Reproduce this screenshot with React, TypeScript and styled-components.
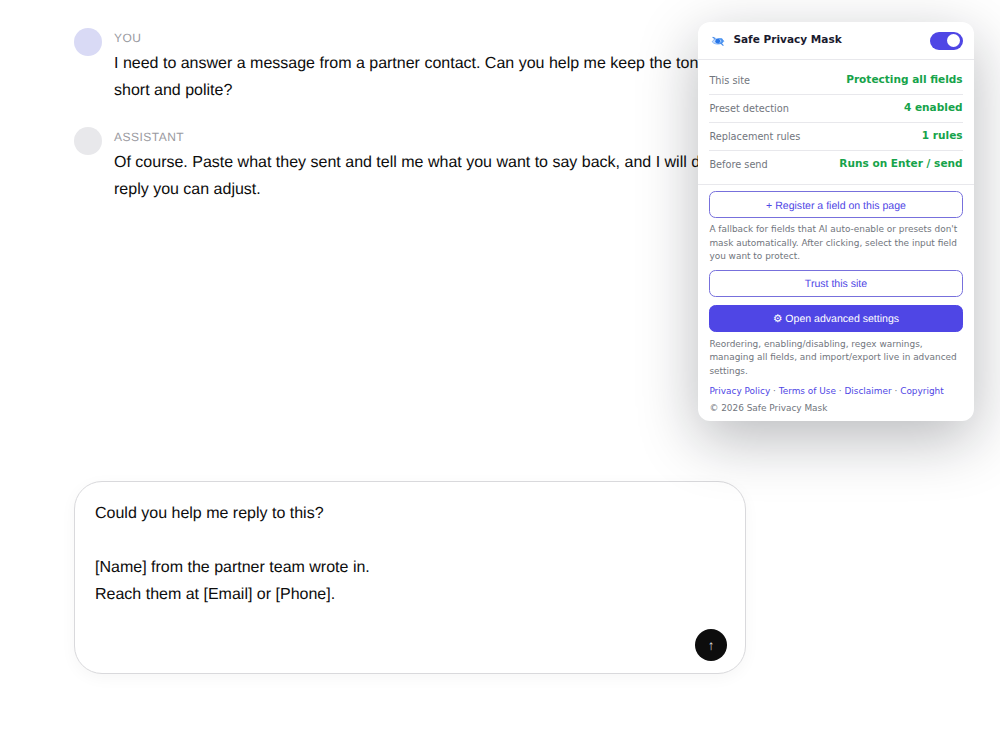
import React from "react";
import styled, { createGlobalStyle } from "styled-components";

const Global = createGlobalStyle`
  * { box-sizing: border-box; }
  body { margin: 0; background: #fff; overflow: hidden; }
`;

const Page = styled.main`
  width: 1000px;
  height: 750px;
  padding: 28px 0 0 74px;
  font: 16px/27.2px "Liberation Sans", Arial, sans-serif;
  color: #0d0d0d;
  text-rendering: geometricPrecision;
`;

const Thread = styled.section`
  display: flex;
  flex-direction: column;
  gap: 23px;
  height: 453px;
`;

const Message = styled.article`
  display: flex;
  gap: 12px;
  width: 672px;
`;

const Avatar = styled.div<{ $color: string }>`
  flex: none;
  width: 28px;
  height: 28px;
  border-radius: 50%;
  background: ${(p) => p.$color};
`;

const Role = styled.div`
  margin-bottom: 1.4px;
  font-size: 12px;
  line-height: 20.4px;
  letter-spacing: 0.48px;
  color: #9a9a9f;
`;

const Line = styled.div`
  white-space: nowrap;
`;

const Composer = styled.section`
  display: flex;
  justify-content: space-between;
  width: 672px;
  height: 193px;
  padding: 17.6px 18px 12px 20px;
  border: 1px solid #d9d9dc;
  border-radius: 28px;
  background: #fff;
  box-shadow: 0 4px 16px rgba(0, 0, 0, 0.04);
`;

const Draft = styled.div`
  white-space: pre-line;
`;

const Send = styled.button`
  align-self: flex-end;
  display: grid;
  place-items: center;
  width: 32px;
  height: 32px;
  padding: 0;
  border: 0;
  border-radius: 50%;
  background: #0d0d0d;
  color: #ddd;
  font: 13.3px "Liberation Sans", Arial, sans-serif;
`;

const Popup = styled.aside`
  position: absolute;
  left: 698px;
  top: 22px;
  width: 276px;
  height: 399.4px;
  border-radius: 12px;
  background: #fff;
  box-shadow: 0 18px 60px rgba(15, 17, 26, 0.29);
  font: 8.94px/13.4px "DejaVu Sans", sans-serif;
  color: #71757d;
`;

const Header = styled.header`
  display: flex;
  align-items: center;
  height: 38px;
  padding: 0 11.4px;
  border-bottom: 1px solid #e8e8ec;
`;

const Title = styled.h1`
  flex: 1;
  margin: -2px 0 0 6px;
  font-size: 10.56px;
  font-weight: 700;
  color: #1a1a2e;
`;

const Toggle = styled.div`
  display: flex;
  justify-content: flex-end;
  width: 32.5px;
  height: 18px;
  padding: 2.5px;
  border-radius: 9px;
  background: #4f46e5;
`;

const Knob = styled.div`
  width: 13px;
  height: 13px;
  border-radius: 50%;
  background: #fff;
`;

const Status = styled.dl`
  margin: 0;
  height: 125px;
  padding: 7px 11.4px;
  border-bottom: 1px solid #e8e8ec;
`;

const Row = styled.div`
  display: flex;
  justify-content: space-between;
  align-items: center;
  height: 28px;
  border-bottom: 1px solid #e8e8ec;
  &:last-child { height: 26px; border-bottom: 0; }
`;

const Label = styled.dt`
  padding-top: 0.6px;
  font-size: 9.74px;
`;

const Value = styled.dd`
  margin: 0;
  padding-bottom: 1.2px;
  font-size: 10.56px;
  font-weight: 700;
  color: #16a34a;
`;

const Actions = styled.section`
  padding: 6.4px 11.4px 0;
`;

const Button = styled.button<{ $primary?: boolean }>`
  display: block;
  width: 100%;
  height: 27px;
  padding: 1.6px 0 0;
  border: 1px solid ${(p) => (p.$primary ? "#4f46e5" : "#7770dc")};
  border-radius: 6.5px;
  background: ${(p) => (p.$primary ? "#4f46e5" : "#fff")};
  color: ${(p) => (p.$primary ? "#fff" : "#4f46e5")};
  font: 10.56px "Liberation Sans", Arial, sans-serif;
  text-rendering: geometricPrecision;
  & + & { margin-top: 8px; }
`;

const Hint = styled.p<{ $top: number }>`
  margin: ${(p) => p.$top}px 0 6.6px;
  white-space: nowrap;
`;

const Links = styled.nav`
  white-space: nowrap;
`;

const Anchor = styled.a`
  color: #4f46e5;
`;

const Copyright = styled.div`
  margin-top: 3.5px;
`;

function Logo() {
  return (
    <svg width="18" height="16" viewBox="0 0 18 16" fill="none">
      <path d="M3.2 8.8C4.2 5.6 11.5 4.2 15 8.2C13 11.4 6.2 12.4 3.2 8.8Z" fill="#c5dcfc" stroke="#7db0f7" strokeWidth=".9" />
      <path d="M9.3 5.2H13L14.7 8.1L12.8 10.8L8.7 10.8Z" fill="#4c94f0" />
      <circle cx="8.7" cy="8.2" r="2.4" fill="#2876e8" />
      <path d="M3.6 4.2L6.4 5.6M11.6 9.8L14.4 12.6" stroke="#4389e8" strokeWidth="1.2" />
      <path d="M10.8 6.4L12 8.1L10.8 9.7" stroke="#d9e9ff" strokeWidth=".7" />
    </svg>
  );
}

const rows = [
  ["This site", "Protecting all fields"],
  ["Preset detection", "4 enabled"],
  ["Replacement rules", "1 rules"],
  ["Before send", "Runs on Enter / send"],
];

export default function App() {
  return (
    <>
      <Global />
      <Page>
        <Thread>
          <Message>
            <Avatar $color="#d9daf5" />
            <div>
              <Role>YOU</Role>
              <Line>I need to answer a message from a partner contact. Can you help me keep the tone</Line>
              <Line>short and polite?</Line>
            </div>
          </Message>
          <Message>
            <Avatar $color="#e8e8eb" />
            <div>
              <Role>ASSISTANT</Role>
              <Line>Of course. Paste what they sent and tell me what you want to say back, and I will draft a</Line>
              <Line>reply you can adjust.</Line>
            </div>
          </Message>
        </Thread>
        <Composer>
          <Draft>{"Could you help me reply to this?\n\n[Name] from the partner team wrote in.\nReach them at [Email] or [Phone]."}</Draft>
          <Send>↑</Send>
        </Composer>
      </Page>
      <Popup>
        <Header>
          <Logo />
          <Title>Safe Privacy Mask</Title>
          <Toggle><Knob /></Toggle>
        </Header>
        <Status>
          {rows.map(([label, value]) => (
            <Row key={label}>
              <Label>{label}</Label>
              <Value>{value}</Value>
            </Row>
          ))}
        </Status>
        <Actions>
          <Button>+ Register a field on this page</Button>
          <Hint $top={4.8}>
            A fallback for fields that AI auto-enable or presets don't<br />
            mask automatically. After clicking, select the input field<br />
            you want to protect.
          </Hint>
          <Button>Trust this site</Button>
          <Button $primary>⚙ Open advanced settings</Button>
          <Hint $top={6}>
            Reordering, enabling/disabling, regex warnings,<br />
            managing all fields, and import/export live in advanced<br />
            settings.
          </Hint>
          <Links>
            <Anchor>Privacy Policy</Anchor> · <Anchor>Terms of Use</Anchor> · <Anchor>Disclaimer</Anchor> · <Anchor>Copyright</Anchor>
          </Links>
          <Copyright>© 2026 Safe Privacy Mask</Copyright>
        </Actions>
      </Popup>
    </>
  );
}
